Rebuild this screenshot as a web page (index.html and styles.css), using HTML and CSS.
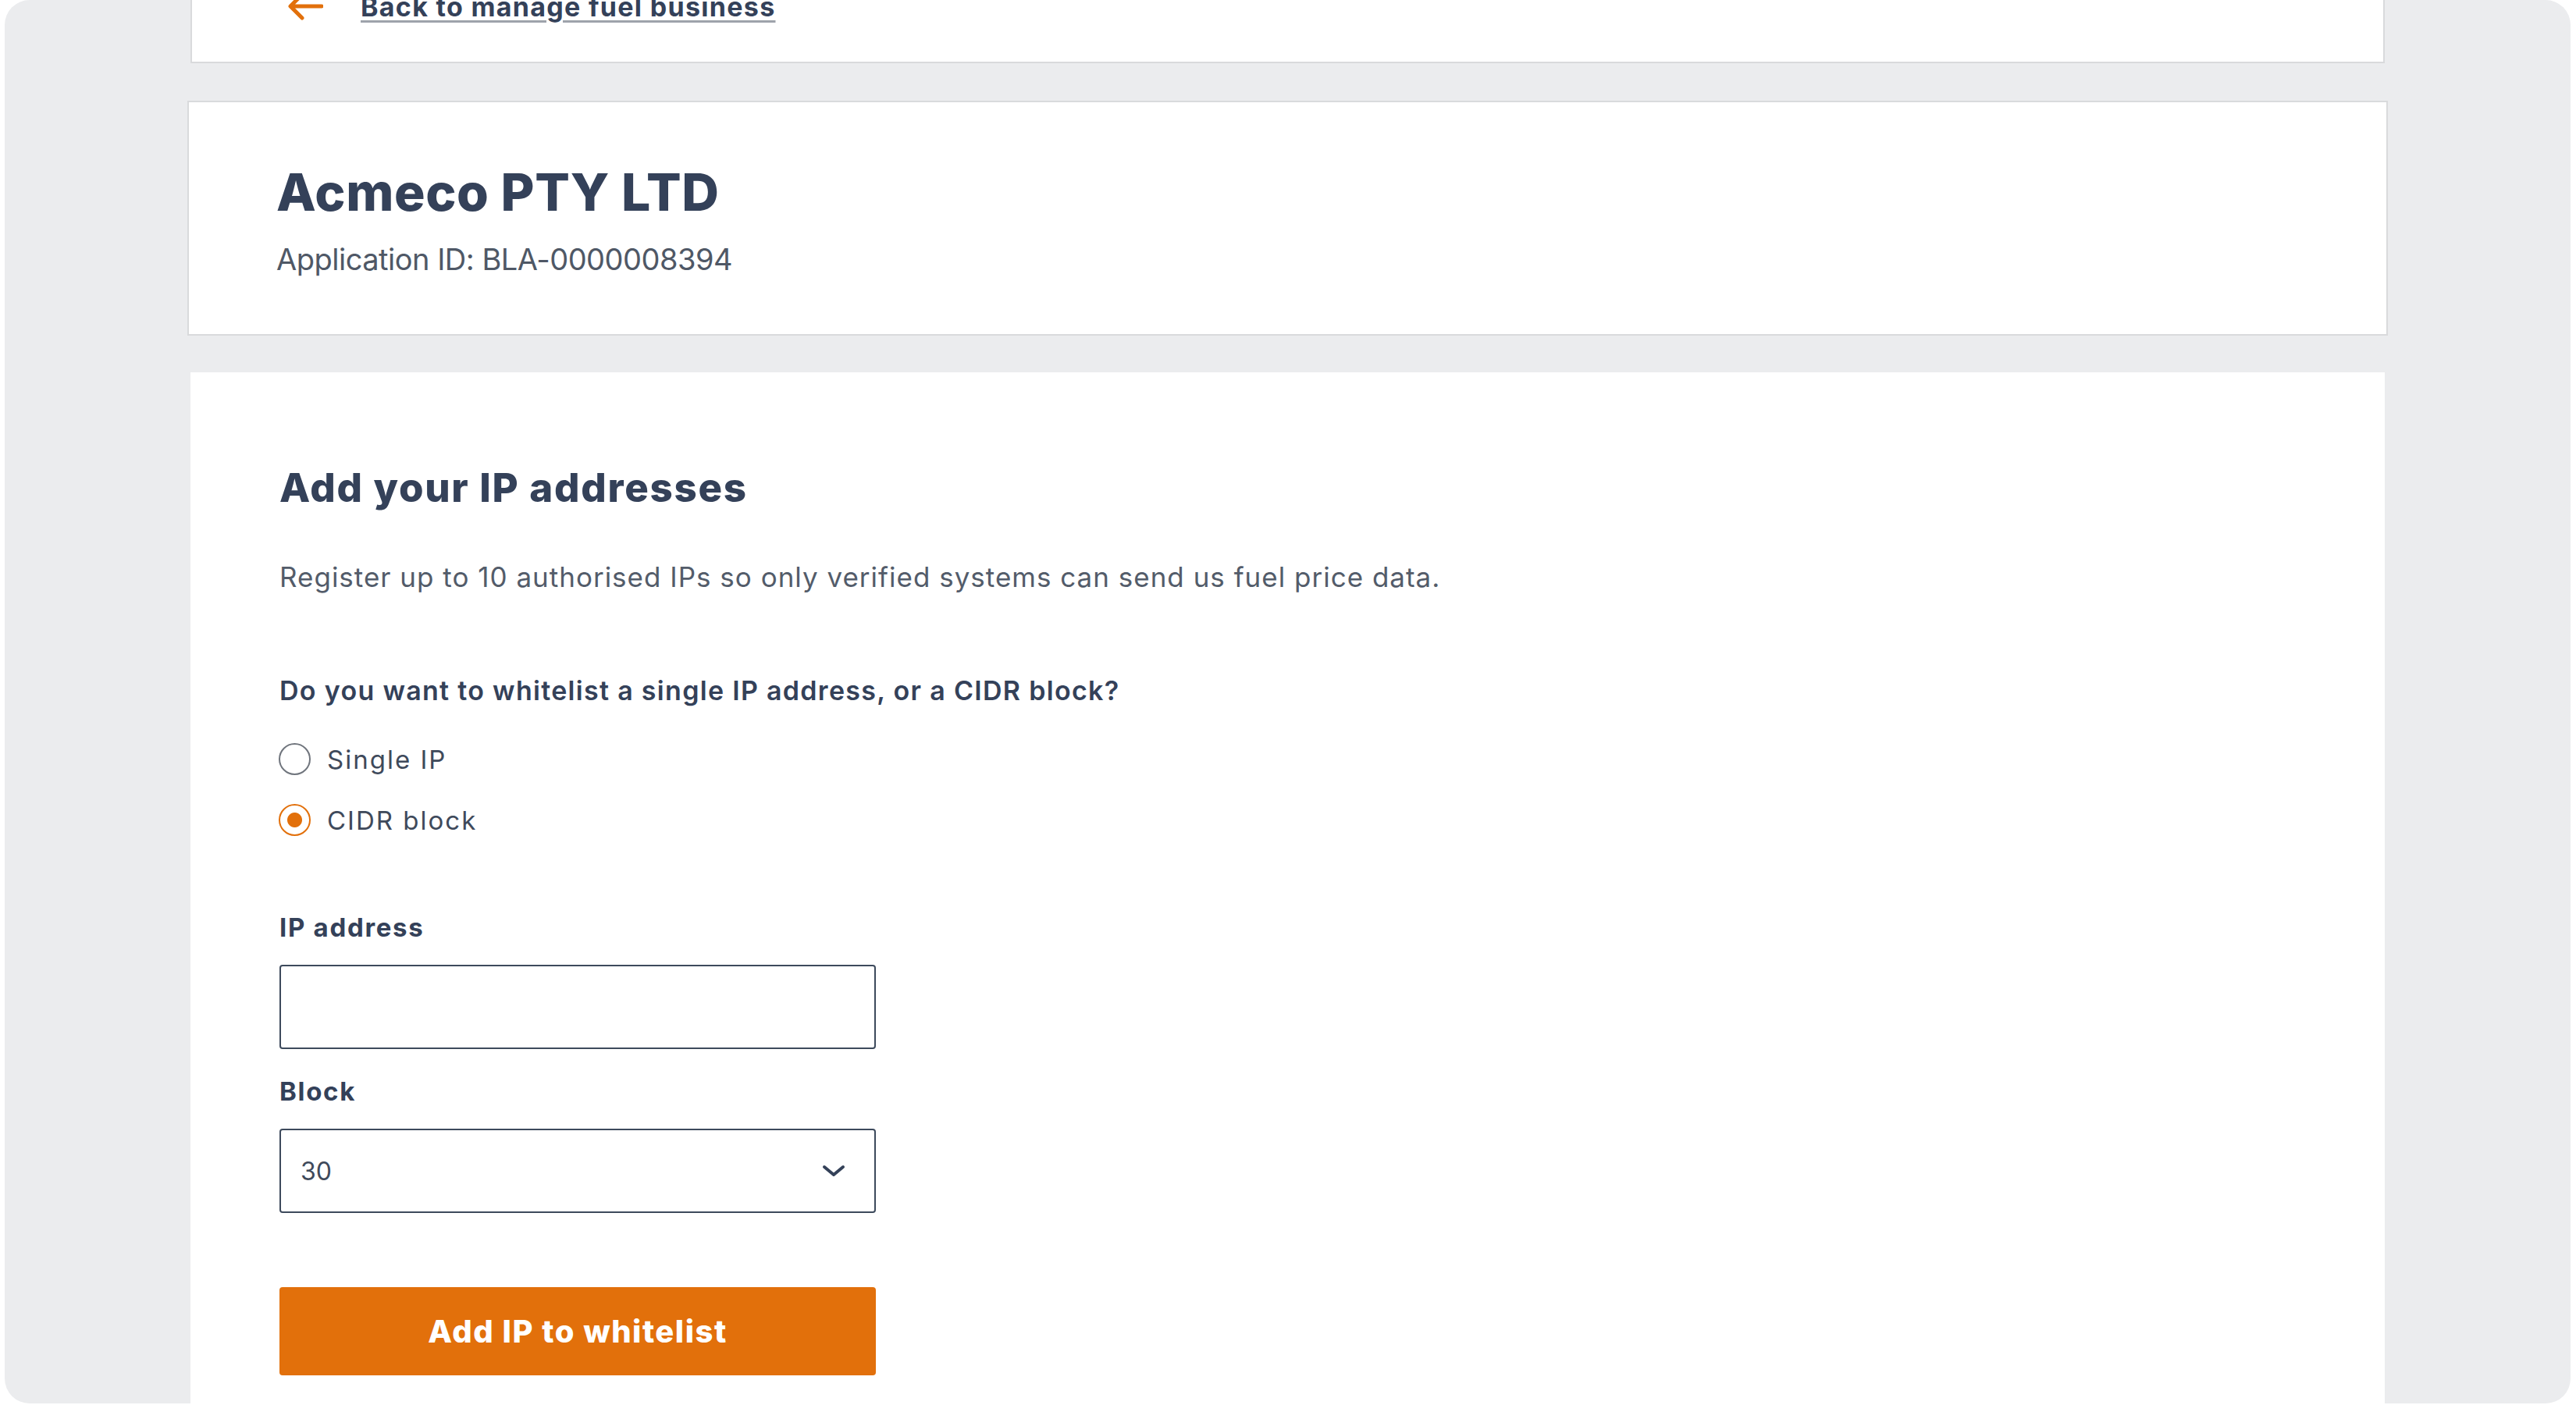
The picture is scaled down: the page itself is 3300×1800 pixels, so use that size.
FILE: index.html
```html
<!DOCTYPE html>
<html lang="en">
<head>
    <meta charset="UTF-8" />
    <meta name="viewport" content="width=device-width, initial-scale=1.0">
    <title>Add your IP addresses</title>
    <link rel="stylesheet" href="styles.css">
</head>
<body>
    <div class="frame">
        <div class="card back-card">
            <a class="back-link" href="#">
                <svg class="back-arrow" width="46" height="36" viewBox="0 0 46 36" aria-hidden="true">
                    <path d="M44 18 H5 M19 3 L4 18 L19 33" fill="none" stroke="#e2700b" stroke-width="5" stroke-linecap="round" stroke-linejoin="round"/>
                </svg>
                <span>Back to manage fuel business</span>
            </a>
        </div>

        <div class="card business-card">
            <h1>Acmeco PTY LTD</h1>
            <p class="app-id">Application ID: BLA-0000008394</p>
        </div>

        <div class="card form-card">
            <h2>Add your IP addresses</h2>
            <p class="intro">Register up to 10 authorised IPs so only verified systems can send us fuel price data.</p>

            <form id="ipForm">
                <p class="question">Do you want to whitelist a single IP address, or a CIDR block?</p>
                <div class="radios">
                    <label class="radio">
                        <input type="radio" name="ipType" value="single" />
                        <span>Single IP</span>
                    </label>
                    <label class="radio">
                        <input type="radio" name="ipType" value="cidr" checked />
                        <span>CIDR block</span>
                    </label>
                </div>

                <div class="form-group first">
                    <label for="ipAddress">IP address</label>
                    <input type="text" id="ipAddress" name="ipAddress" />
                </div>

                <div class="form-group">
                    <label for="block">Block</label>
                    <div class="select-wrap">
                        <select id="block" name="block">
                            <option>30</option>
                            <option>29</option>
                            <option>28</option>
                            <option>24</option>
                        </select>
                        <svg class="chevron" width="30" height="16" viewBox="0 0 30 16" aria-hidden="true">
                            <path d="M3 3 L15 13 L27 3" fill="none" stroke="#344159" stroke-width="4" stroke-linecap="round" stroke-linejoin="round"/>
                        </svg>
                    </div>
                </div>

                <button type="submit">Add IP to whitelist</button>
            </form>
        </div>
    </div>
</body>
</html>
```

FILE: styles.css
```css
body {
    margin: 0;
    background-color: white;
    font-family: Inter, "Liberation Sans", sans-serif;
    color: #344159;
}

.frame {
    box-sizing: border-box;
    height: 1798px;
    margin: 0 7px 0 6px;
    padding: 0 238px;
    background-color: #ebecee;
    border-radius: 32px;
    overflow: hidden;
}

.card {
    background-color: white;
    border: 2px solid #d9dadc;
}

/* tarjeta del enlace de vuelta (cortada arriba) */
.back-card {
    margin-top: -60px;
    padding: 46px 0 51px 122px;
}

.back-link {
    display: flex;
    align-items: center;
    gap: 48px;
    height: 40px;
    font-size: 34px;
    font-weight: 700;
    letter-spacing: 1.3px;
    color: #344159;
    text-decoration: underline;
    text-decoration-color: #9ea3ab;
    text-decoration-thickness: 3px;
    text-underline-offset: 5px;
}

.back-arrow {
    flex-shrink: 0;
}

.business-card {
    margin: 48px -4px 0;
    padding: 75px 112px 72px;
}

h1 {
    margin: 0;
    font-size: 66px;
    line-height: 80px;
    font-weight: 800;
    letter-spacing: 0.6px;
}

.app-id {
    margin: 22px 0 0;
    font-size: 38px;
    line-height: 48px;
    letter-spacing: -0.5px;
    color: #4f5866;
}

.form-card {
    margin-top: 47px;
    padding: 118px 114px 120px;
    border: none;
    min-height: 1400px;
}

h2 {
    margin: 0;
    font-size: 51px;
    line-height: 60px;
    font-weight: 800;
    letter-spacing: 1.7px;
}

.intro {
    margin: 60px 0 0;
    font-size: 35px;
    line-height: 48px;
    letter-spacing: 1px;
    color: #535c6a;
}

.question {
    margin: 100px 0 0;
    font-size: 34px;
    line-height: 44px;
    font-weight: 600;
    letter-spacing: 1.3px;
}

.radios {
    display: flex;
    flex-direction: column;
    gap: 37px;
    margin-top: 45px;
}

.radio {
    display: flex;
    align-items: center;
    gap: 21px;
    font-size: 33px;
    line-height: 40px;
    letter-spacing: 2px;
    color: #3f4a5b;
    cursor: pointer;
}

.radio input {
    appearance: none;
    box-sizing: border-box;
    width: 41px;
    height: 41px;
    margin: 0 0 0 -1px;
    border: 2px solid #70757d;
    border-radius: 50%;
    background-color: white;
}

.radio input:checked {
    border-color: #e2700b;
    background: radial-gradient(circle, #e2700b 0 9px, white 10px);
}

.form-group {
    margin-top: 32px;
}

.form-group.first {
    margin-top: 95px;
}

.form-group label {
    display: block;
    margin-bottom: 26px;
    font-size: 33px;
    line-height: 44px;
    font-weight: 700;
    letter-spacing: 1.7px;
}

input[type="text"], select {
    box-sizing: border-box;
    width: 764px;
    height: 108px;
    border: 2px solid #3d4a5c;
    border-radius: 4px;
    background-color: white;
    font-family: inherit;
    font-size: 32px;
    color: #3f4a5b;
}

input[type="text"] {
    padding: 0 25px;
}

select {
    appearance: none;
    padding: 0 25px;
}

.select-wrap {
    position: relative;
    width: 764px;
}

.chevron {
    position: absolute;
    right: 39px;
    top: 50%;
    transform: translateY(-50%);
    pointer-events: none;
}

button {
    display: block;
    width: 764px;
    height: 113px;
    margin-top: 95px;
    border: none;
    border-radius: 4px;
    background-color: #e2700b;
    color: white;
    font-family: inherit;
    font-size: 40px;
    font-weight: 800;
    letter-spacing: 1.5px;
    cursor: pointer;
}

button:hover {
    background-color: #d0650a;
}
```
